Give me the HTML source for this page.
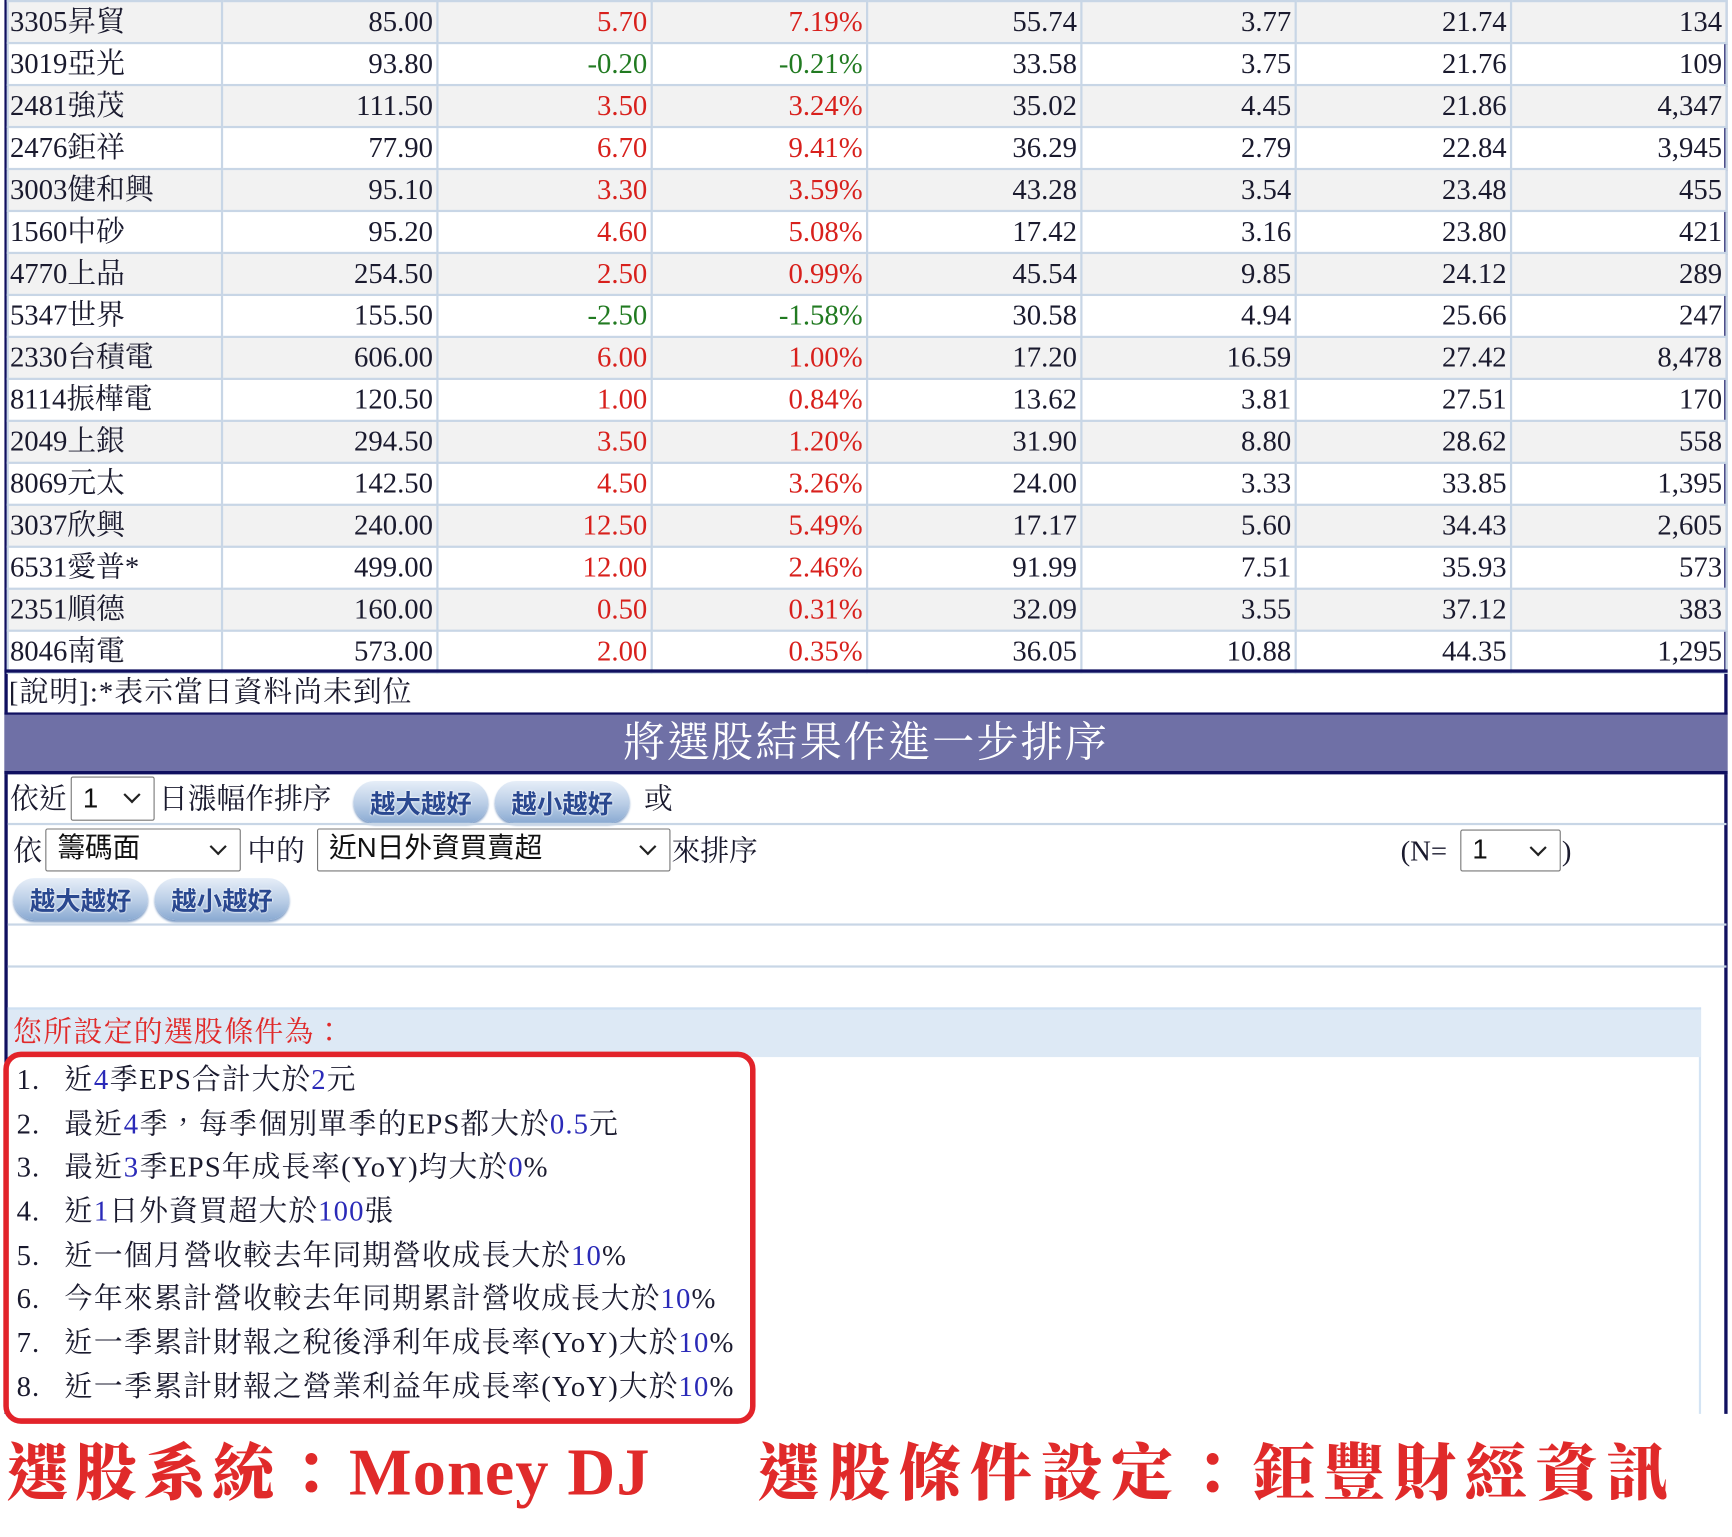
<!DOCTYPE html>
<html><head><meta charset="utf-8">
<style>
html,body{margin:0;padding:0;background:#fff;width:1732px;height:1536px;overflow:hidden}
#w{position:absolute;left:0;top:0;width:1568px;height:1391px;transform:scale(1.10459);transform-origin:0 0;font-family:"Liberation Serif","Noto Serif CJK TC","Noto Serif CJK SC",serif;color:#1a1a2e}
.a{position:absolute}
table{border-collapse:collapse;position:absolute;left:6px;top:0;table-layout:fixed}
td{height:36px;border:2px solid #c8d6e6;font-size:26px;padding:0 3px;white-space:nowrap;line-height:36px;text-align:right}
td:first-child{text-align:left;padding-left:1px}
tr:nth-child(odd) td{background:#f2f2f2}
.r{color:#d8201c}.g{color:#217a21}
.hl{position:absolute;left:7px;width:1556px;height:2px;background:#c8d6e6}
.sel{position:absolute;border:1px solid #777;border-radius:2px;background:#fff;font-family:"Liberation Sans","Noto Sans CJK TC",sans-serif;font-size:25px;box-sizing:border-box;line-height:34px;padding-left:10px;color:#111}
.sel:after{content:"";position:absolute;right:14px;top:10px;width:9px;height:9px;border-right:2px solid #222;border-bottom:2px solid #222;transform:rotate(45deg)}
.btn{position:absolute;height:38px;width:122px;border-radius:19px;background:linear-gradient(#e6eef8,#b9cde6 55%,#8aaad2);box-shadow:0 2px 2px #7d9cc6;font-family:"Noto Sans CJK TC",sans-serif;font-weight:bold;font-size:23px;color:#2a4890;text-align:center;line-height:38px;text-shadow:0 0 2px #fff,0 0 2px #fff}
.t{font-size:26px;white-space:nowrap}
.li{position:absolute;left:15px;font-size:26px;white-space:nowrap;letter-spacing:1px}
.li b{font-weight:normal;display:inline-block;width:43px}
.bl{color:#2a2ab8}
.big{position:absolute;top:1295px;font-family:"Noto Serif CJK TC","Noto Serif CJK SC",serif;font-weight:900;color:#e02a2a;font-size:56px;white-space:nowrap;line-height:70px}
.big i{font-style:normal;font-family:"Liberation Serif",serif;font-weight:bold;letter-spacing:1px;font-size:60px}
</style></head><body><div id="w">
<div class="a" style="left:4px;top:0;width:3px;height:1280px;background:#101060"></div>
<div class="a" style="left:1561px;top:0;width:3px;height:1280px;background:#101060"></div>
<table>
<colgroup><col style="width:194px"><col style="width:195px"><col style="width:194px"><col style="width:195px"><col style="width:194px"><col style="width:194px"><col style="width:195px"><col style="width:195px"></colgroup>
<tr><td>3305昇貿</td><td>85.00</td><td class="r">5.70</td><td class="r">7.19%</td><td>55.74</td><td>3.77</td><td>21.74</td><td>134</td></tr>
<tr><td>3019亞光</td><td>93.80</td><td class="g">-0.20</td><td class="g">-0.21%</td><td>33.58</td><td>3.75</td><td>21.76</td><td>109</td></tr>
<tr><td>2481強茂</td><td>111.50</td><td class="r">3.50</td><td class="r">3.24%</td><td>35.02</td><td>4.45</td><td>21.86</td><td>4,347</td></tr>
<tr><td>2476鉅祥</td><td>77.90</td><td class="r">6.70</td><td class="r">9.41%</td><td>36.29</td><td>2.79</td><td>22.84</td><td>3,945</td></tr>
<tr><td>3003健和興</td><td>95.10</td><td class="r">3.30</td><td class="r">3.59%</td><td>43.28</td><td>3.54</td><td>23.48</td><td>455</td></tr>
<tr><td>1560中砂</td><td>95.20</td><td class="r">4.60</td><td class="r">5.08%</td><td>17.42</td><td>3.16</td><td>23.80</td><td>421</td></tr>
<tr><td>4770上品</td><td>254.50</td><td class="r">2.50</td><td class="r">0.99%</td><td>45.54</td><td>9.85</td><td>24.12</td><td>289</td></tr>
<tr><td>5347世界</td><td>155.50</td><td class="g">-2.50</td><td class="g">-1.58%</td><td>30.58</td><td>4.94</td><td>25.66</td><td>247</td></tr>
<tr><td>2330台積電</td><td>606.00</td><td class="r">6.00</td><td class="r">1.00%</td><td>17.20</td><td>16.59</td><td>27.42</td><td>8,478</td></tr>
<tr><td>8114振樺電</td><td>120.50</td><td class="r">1.00</td><td class="r">0.84%</td><td>13.62</td><td>3.81</td><td>27.51</td><td>170</td></tr>
<tr><td>2049上銀</td><td>294.50</td><td class="r">3.50</td><td class="r">1.20%</td><td>31.90</td><td>8.80</td><td>28.62</td><td>558</td></tr>
<tr><td>8069元太</td><td>142.50</td><td class="r">4.50</td><td class="r">3.26%</td><td>24.00</td><td>3.33</td><td>33.85</td><td>1,395</td></tr>
<tr><td>3037欣興</td><td>240.00</td><td class="r">12.50</td><td class="r">5.49%</td><td>17.17</td><td>5.60</td><td>34.43</td><td>2,605</td></tr>
<tr><td>6531愛普*</td><td>499.00</td><td class="r">12.00</td><td class="r">2.46%</td><td>91.99</td><td>7.51</td><td>35.93</td><td>573</td></tr>
<tr><td>2351順德</td><td>160.00</td><td class="r">0.50</td><td class="r">0.31%</td><td>32.09</td><td>3.55</td><td>37.12</td><td>383</td></tr>
<tr><td>8046南電</td><td>573.00</td><td class="r">2.00</td><td class="r">0.35%</td><td>36.05</td><td>10.88</td><td>44.35</td><td>1,295</td></tr>
</table>
<div class="a" style="left:4px;top:606px;width:1560px;height:3px;background:#101060"></div>
<div class="a t" style="left:8px;top:609px;line-height:36px;letter-spacing:1px">[說明]:*表示當日資料尚未到位</div>
<div class="a" style="left:4px;top:645px;width:1560px;height:56px;background:#6f70a6;border-top:2px solid #101060;border-bottom:3px solid #101060;box-sizing:border-box;color:#fff;font-size:38px;letter-spacing:2px;text-align:center;line-height:52px">將選股結果作進一步排序</div>
<div class="a t" style="left:9px;top:705px;line-height:38px">依近</div>
<div class="sel" style="left:64px;top:703px;width:76px;height:40px;line-height:38px">1</div>
<div class="a t" style="left:144px;top:705px;line-height:38px">日漲幅作排序</div>
<div class="btn" style="left:320px;top:707px">越大越好</div>
<div class="btn" style="left:448px;top:707px">越小越好</div>
<div class="a t" style="left:583px;top:705px;line-height:38px">或</div>
<div class="hl" style="top:745px"></div>
<div class="a t" style="left:12px;top:752px;line-height:38px">依</div>
<div class="sel" style="left:41px;top:750px;width:177px;height:39px">籌碼面</div>
<div class="a t" style="left:224px;top:752px;line-height:38px">中的</div>
<div class="sel" style="left:287px;top:750px;width:320px;height:39px">近N日外資買賣超</div>
<div class="a t" style="left:608px;top:752px;line-height:38px">來排序</div>
<div class="a t" style="left:1268px;top:752px;line-height:38px">(N=</div>
<div class="sel" style="left:1322px;top:751px;width:91px;height:38px">1</div>
<div class="a t" style="left:1414px;top:752px;line-height:38px">)</div>
<div class="btn" style="left:12px;top:795px">越大越好</div>
<div class="btn" style="left:140px;top:795px">越小越好</div>
<div class="hl" style="top:836px"></div>
<div class="hl" style="top:874px"></div>
<div class="a" style="left:7px;top:912px;width:1533px;height:368px;border-right:2px solid #d4e4f4;box-sizing:border-box"></div>
<div class="a" style="left:7px;top:912px;width:1533px;height:43px;background:#dde9f5;border-top:2px solid #cfe0f2"></div>
<div class="a t" style="left:12px;top:915px;line-height:40px;color:#e02a2a;letter-spacing:1.3px">您所設定的選股條件為：</div>
<div class="a" style="left:3px;top:952px;width:681px;height:337px;border:5px solid #e2232a;border-radius:16px;box-sizing:border-box"></div>
<div class="li" style="top:958px;line-height:40px"><b>1.</b>近<span class="bl">4</span>季EPS合計大於<span class="bl">2</span>元</div>
<div class="li" style="top:998px;line-height:40px"><b>2.</b>最近<span class="bl">4</span>季，每季個別單季的EPS都大於<span class="bl">0.5</span>元</div>
<div class="li" style="top:1037px;line-height:40px"><b>3.</b>最近<span class="bl">3</span>季EPS年成長率(YoY)均大於<span class="bl">0</span>%</div>
<div class="li" style="top:1077px;line-height:40px"><b>4.</b>近<span class="bl">1</span>日外資買超大於<span class="bl">100</span>張</div>
<div class="li" style="top:1117px;line-height:40px"><b>5.</b>近一個月營收較去年同期營收成長大於<span class="bl">10</span>%</div>
<div class="li" style="top:1156px;line-height:40px"><b>6.</b>今年來累計營收較去年同期累計營收成長大於<span class="bl">10</span>%</div>
<div class="li" style="top:1196px;line-height:40px"><b>7.</b>近一季累計財報之稅後淨利年成長率(YoY)大於<span class="bl">10</span>%</div>
<div class="li" style="top:1236px;line-height:40px"><b>8.</b>近一季累計財報之營業利益年成長率(YoY)大於<span class="bl">10</span>%</div>
<div class="big" style="left:6px;letter-spacing:6px">選股系統：<i>Money DJ</i></div>
<div class="big" style="left:686px;letter-spacing:8px">選股條件設定：鉅豐財經資訊</div>
</div></body></html>
